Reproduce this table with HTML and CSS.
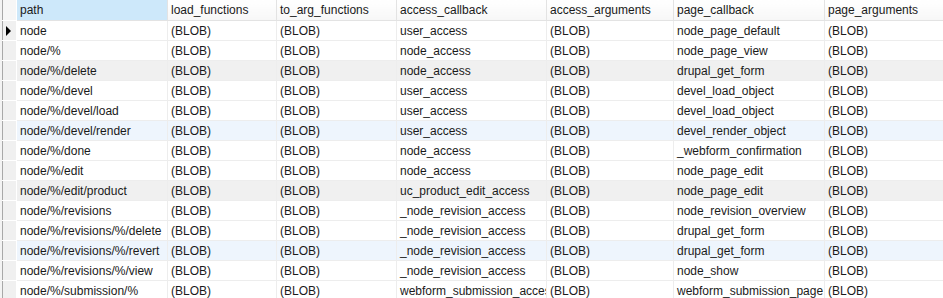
FILE: index.html
```html
<!DOCTYPE html>
<html lang="en">
  <head>
    <meta charset="UTF-8" />
    <title>menu_router</title>
    <link rel="stylesheet" href="styles.css">
  </head>
  <body>
    <div class="grid-wrap">
      <table class="grid">
        <colgroup>
          <col class="c-ind" />
          <col class="c-path" />
          <col class="c-load" />
          <col class="c-toarg" />
          <col class="c-acb" />
          <col class="c-aarg" />
          <col class="c-pcb" />
          <col class="c-parg" />
        </colgroup>
        <thead>
          <tr>
            <th class="ind"></th>
            <th class="sorted">path</th>
            <th>load_functions</th>
            <th>to_arg_functions</th>
            <th>access_callback</th>
            <th>access_arguments</th>
            <th>page_callback</th>
            <th>page_arguments</th>
          </tr>
        </thead>
        <tbody>
          <tr>
            <td class="ind"><span class="cursor"></span></td>
            <td>node</td><td>(BLOB)</td><td>(BLOB)</td><td>user_access</td><td>(BLOB)</td><td>node_page_default</td><td>(BLOB)</td>
          </tr>
          <tr>
            <td class="ind"></td>
            <td>node/%</td><td>(BLOB)</td><td>(BLOB)</td><td>node_access</td><td>(BLOB)</td><td>node_page_view</td><td>(BLOB)</td>
          </tr>
          <tr class="gray">
            <td class="ind"></td>
            <td>node/%/delete</td><td>(BLOB)</td><td>(BLOB)</td><td>node_access</td><td>(BLOB)</td><td>drupal_get_form</td><td>(BLOB)</td>
          </tr>
          <tr>
            <td class="ind"></td>
            <td>node/%/devel</td><td>(BLOB)</td><td>(BLOB)</td><td>user_access</td><td>(BLOB)</td><td>devel_load_object</td><td>(BLOB)</td>
          </tr>
          <tr>
            <td class="ind"></td>
            <td>node/%/devel/load</td><td>(BLOB)</td><td>(BLOB)</td><td>user_access</td><td>(BLOB)</td><td>devel_load_object</td><td>(BLOB)</td>
          </tr>
          <tr class="blue">
            <td class="ind"></td>
            <td>node/%/devel/render</td><td>(BLOB)</td><td>(BLOB)</td><td>user_access</td><td>(BLOB)</td><td>devel_render_object</td><td>(BLOB)</td>
          </tr>
          <tr>
            <td class="ind"></td>
            <td>node/%/done</td><td>(BLOB)</td><td>(BLOB)</td><td>node_access</td><td>(BLOB)</td><td>_webform_confirmation</td><td>(BLOB)</td>
          </tr>
          <tr>
            <td class="ind"></td>
            <td>node/%/edit</td><td>(BLOB)</td><td>(BLOB)</td><td>node_access</td><td>(BLOB)</td><td>node_page_edit</td><td>(BLOB)</td>
          </tr>
          <tr class="gray">
            <td class="ind"></td>
            <td>node/%/edit/product</td><td>(BLOB)</td><td>(BLOB)</td><td>uc_product_edit_access</td><td>(BLOB)</td><td>node_page_edit</td><td>(BLOB)</td>
          </tr>
          <tr>
            <td class="ind"></td>
            <td>node/%/revisions</td><td>(BLOB)</td><td>(BLOB)</td><td>_node_revision_access</td><td>(BLOB)</td><td>node_revision_overview</td><td>(BLOB)</td>
          </tr>
          <tr>
            <td class="ind"></td>
            <td>node/%/revisions/%/delete</td><td>(BLOB)</td><td>(BLOB)</td><td>_node_revision_access</td><td>(BLOB)</td><td>drupal_get_form</td><td>(BLOB)</td>
          </tr>
          <tr class="blue">
            <td class="ind"></td>
            <td>node/%/revisions/%/revert</td><td>(BLOB)</td><td>(BLOB)</td><td>_node_revision_access</td><td>(BLOB)</td><td>drupal_get_form</td><td>(BLOB)</td>
          </tr>
          <tr>
            <td class="ind"></td>
            <td>node/%/revisions/%/view</td><td>(BLOB)</td><td>(BLOB)</td><td>_node_revision_access</td><td>(BLOB)</td><td>node_show</td><td>(BLOB)</td>
          </tr>
          <tr>
            <td class="ind"></td>
            <td>node/%/submission/%</td><td>(BLOB)</td><td>(BLOB)</td><td>webform_submission_access</td><td>(BLOB)</td><td>webform_submission_page</td><td>(BLOB)</td>
          </tr>
        </tbody>
      </table>
    </div>
  </body>
</html>
```

FILE: styles.css
```css
:root {
  --text: #1a1a1a;
  --line: #ededed;
  --head-line: #e3e3e3;
  --ind-bg: #f0f0f0;
  --gray-row: #f0f0f0;
  --blue-row: #eef5fd;
  --sorted: #cde8fa;
}

* {
  margin: 0;
  padding: 0;
  box-sizing: border-box;
}

body {
  font-family: "Liberation Sans", Arial, sans-serif;
  font-size: 12px;
  color: var(--text);
  background-color: #ffffff;
  overflow: hidden;
}

.grid-wrap {
  width: 943px;
  height: 298px;
  overflow: hidden;
  border-left: 2px solid #f3f3f3;
}

.grid {
  border-collapse: collapse;
  table-layout: fixed;
  width: 1000px;
}

.c-ind { width: 14px; }
.c-path { width: 151px; }
.c-load { width: 109px; }
.c-toarg { width: 120px; }
.c-acb { width: 150px; }
.c-aarg { width: 127px; }
.c-pcb { width: 151px; }
.c-parg { width: 178px; }

th,
td {
  height: 20px;
  padding: 1px 0 0 3px;
  text-align: left;
  font-weight: normal;
  white-space: nowrap;
  overflow: hidden;
  text-overflow: clip;
  border-right: 1px solid var(--line);
  border-bottom: 1px solid var(--line);
  line-height: 18px;
}

th {
  padding-top: 2px;
  line-height: 17px;
  background: linear-gradient(#ffffff, #f7f7f7);
  border-right-color: var(--head-line);
  border-bottom-color: var(--head-line);
}

th.sorted {
  background: var(--sorted);
}

.ind {
  position: relative;
  background-color: var(--ind-bg);
  border-left: 1px solid #a8a8a8;
  border-right-color: #ffffff;
  border-bottom-color: #ffffff;
  padding: 0;
}

th.ind {
  background: #f6f6f6;
}

tr.gray td {
  background-color: var(--gray-row);
}

tr.blue td {
  background-color: var(--blue-row);
}

tr.gray td.ind,
tr.blue td.ind {
  background-color: var(--ind-bg);
}

.cursor {
  position: absolute;
  left: 3px;
  top: 5px;
  width: 0;
  height: 0;
  border-top: 5px solid transparent;
  border-bottom: 5px solid transparent;
  border-left: 5px solid #000000;
}
```
